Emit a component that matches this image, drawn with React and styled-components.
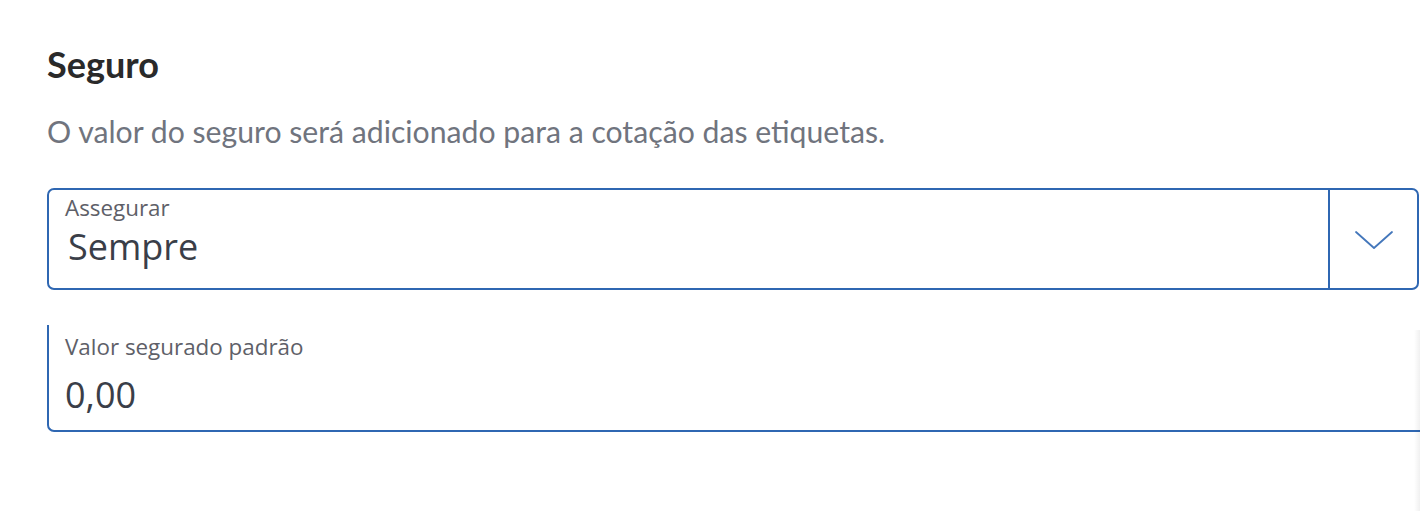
import React from "react";
import styled, { createGlobalStyle } from "styled-components";

const Global = createGlobalStyle`
  html, body { margin: 0; padding: 0; background: #fff; }
  body { overflow: hidden; width: 1420px; height: 511px; }
`;

const Page = styled.div`
  position: relative;
  width: 1420px;
  height: 511px;
  box-sizing: border-box;
  padding: 41px 1px 0 47px;
  display: flex;
  flex-direction: column;
`;

const Title = styled.h2`
  margin: 0;
  font-family: Lato, "Noto Sans", sans-serif;
  font-weight: 700;
  font-size: 36px;
  line-height: 46px;
  color: #2a2a2a;
`;

const Description = styled.p`
  margin: 24px 0 0;
  font-family: Lato, "Noto Sans", sans-serif;
  font-weight: 400;
  font-size: 30.2px;
  line-height: 40px;
  color: #70747e;
`;

const SelectBox = styled.div`
  margin-top: 37px;
  height: 102px;
  box-sizing: border-box;
  border: 2px solid #2f67b2;
  border-radius: 7px;
  display: flex;
`;

const FieldBody = styled.div`
  flex: 1;
  display: flex;
  flex-direction: column;
  padding: 5px 0 0 16px;
`;

const Label = styled.span`
  display: block;
  font-family: "Open Sans", sans-serif;
  font-size: 22.4px;
  line-height: 26px;
  color: #5e6068;
`;

const Value = styled.span`
  display: block;
  font-family: "Open Sans", sans-serif;
  font-size: 36px;
  line-height: 46px;
  color: #3a3e48;
  margin-top: ${(p) => p.$gap || 0}px;
  padding-left: ${(p) => p.$indent || 0}px;
`;

const ChevronCell = styled.div`
  width: 87px;
  border-left: 2px solid #2f67b2;
  display: flex;
  align-items: center;
  justify-content: center;
  padding-top: 2px;
`;

const InputBox = styled.div`
  margin-top: 35px;
  width: calc(100% + 20px);
  height: 107px;
  box-sizing: border-box;
  border-left: 2px solid #2f67b2;
  border-bottom: 2px solid #2f67b2;
  border-bottom-left-radius: 7px;
  display: flex;
  flex-direction: column;
  padding: 9px 0 0 16px;
`;

const EdgeShade = styled.div`
  position: absolute;
  right: 0;
  top: 330px;
  bottom: 0;
  width: 6px;
  background: linear-gradient(to right, rgba(0,0,0,0), rgba(0,0,0,0.06));
`;

export default function App() {
  return (
    <>
      <Global />
      <Page>
        <Title>Seguro</Title>
        <Description>O valor do seguro será adicionado para a cotação das etiquetas.</Description>
        <SelectBox>
          <FieldBody>
            <Label>Assegurar</Label>
            <Value $indent={3} $gap={3}>Sempre</Value>
          </FieldBody>
          <ChevronCell>
            <svg width="40" height="22" viewBox="0 0 40 22" fill="none">
              <path d="M2 3 L20 19 L38 3" stroke="#4477bb" strokeWidth="1.8" strokeLinecap="round" strokeLinejoin="round" />
            </svg>
          </ChevronCell>
        </SelectBox>
        <InputBox>
          <Label>Valor segurado padrão</Label>
          <Value $gap={12}>0,00</Value>
        </InputBox>
        <EdgeShade />
      </Page>
    </>
  );
}
